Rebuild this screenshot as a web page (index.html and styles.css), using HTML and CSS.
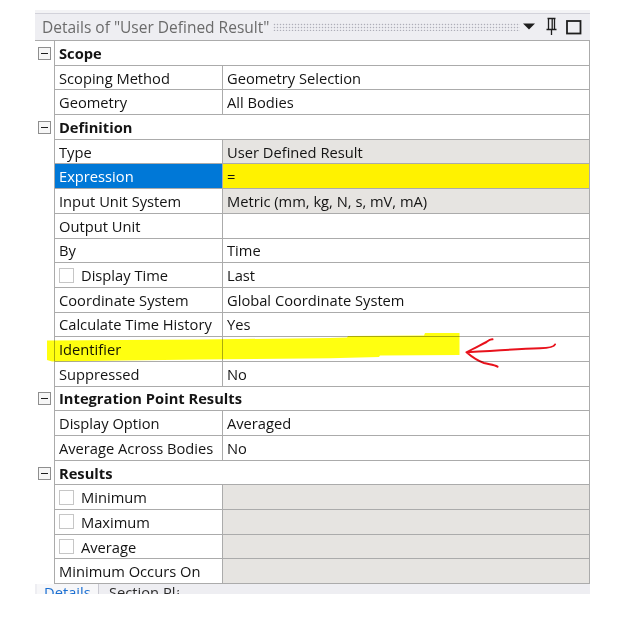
FILE: index.html
```html
<!DOCTYPE html>
<html>
<head>
<meta charset="utf-8">
<title>Details of "User Defined Result"</title>
<link rel="stylesheet" href="styles.css">
</head>
<body>
<div class="panel">
  <div class="band"></div>
  <div class="titlebar">
    <span class="title">Details of "User Defined Result"</span>
    <span class="grip"></span>
    <svg class="tb-icons" width="66" height="26" viewBox="0 0 66 26">
      <polygon points="1,9.5 13,9.5 7,15.5" fill="#1e1e1e"/>
      <path d="M25.5 4.5 H33.5 M26.5 4.5 V15.5 M32.5 4.5 V15.5 M30.2 5 V15 M24.5 15.5 H34.5 M29.5 15.5 V21" stroke="#1e1e1e" stroke-width="1.3" fill="none"/>
      <rect x="45" y="7" width="13.5" height="12.5" fill="none" stroke="#1e1e1e" stroke-width="1.8"/>
    </svg>
  </div>
  <div class="grid">
    <div class="row cat"><div class="gutter"><span class="toggle"></span></div><div class="cells"><div class="label">Scope</div></div></div>
    <div class="row"><div class="gutter"></div><div class="cells"><div class="name">Scoping Method</div><div class="value">Geometry Selection</div></div></div>
    <div class="row"><div class="gutter"></div><div class="cells"><div class="name">Geometry</div><div class="value">All Bodies</div></div></div>
    <div class="row cat"><div class="gutter"><span class="toggle"></span></div><div class="cells"><div class="label">Definition</div></div></div>
    <div class="row"><div class="gutter"></div><div class="cells"><div class="name">Type</div><div class="value gray">User Defined Result</div></div></div>
    <div class="row"><div class="gutter"></div><div class="cells"><div class="name sel">Expression</div><div class="value yel">=</div></div></div>
    <div class="row"><div class="gutter"></div><div class="cells"><div class="name">Input Unit System</div><div class="value gray">Metric (mm, kg, N, s, mV, mA)</div></div></div>
    <div class="row"><div class="gutter"></div><div class="cells"><div class="name">Output Unit</div><div class="value"></div></div></div>
    <div class="row"><div class="gutter"></div><div class="cells"><div class="name">By</div><div class="value">Time</div></div></div>
    <div class="row"><div class="gutter"></div><div class="cells"><div class="name"><span class="cb"></span>Display Time</div><div class="value">Last</div></div></div>
    <div class="row"><div class="gutter"></div><div class="cells"><div class="name">Coordinate System</div><div class="value">Global Coordinate System</div></div></div>
    <div class="row"><div class="gutter"></div><div class="cells"><div class="name">Calculate Time History</div><div class="value">Yes</div></div></div>
    <div class="row"><div class="gutter"></div><div class="cells"><div class="name">Identifier</div><div class="value"></div></div></div>
    <div class="row"><div class="gutter"></div><div class="cells"><div class="name">Suppressed</div><div class="value">No</div></div></div>
    <div class="row cat"><div class="gutter"><span class="toggle"></span></div><div class="cells"><div class="label">Integration Point Results</div></div></div>
    <div class="row"><div class="gutter"></div><div class="cells"><div class="name">Display Option</div><div class="value">Averaged</div></div></div>
    <div class="row"><div class="gutter"></div><div class="cells"><div class="name">Average Across Bodies</div><div class="value">No</div></div></div>
    <div class="row cat"><div class="gutter"><span class="toggle"></span></div><div class="cells"><div class="label">Results</div></div></div>
    <div class="row"><div class="gutter"></div><div class="cells"><div class="name"><span class="cb"></span>Minimum</div><div class="value gray"></div></div></div>
    <div class="row"><div class="gutter"></div><div class="cells"><div class="name"><span class="cb"></span>Maximum</div><div class="value gray"></div></div></div>
    <div class="row"><div class="gutter"></div><div class="cells"><div class="name"><span class="cb"></span>Average</div><div class="value gray"></div></div></div>
    <div class="row"><div class="gutter"></div><div class="cells"><div class="name">Minimum Occurs On</div><div class="value gray"></div></div></div>
  </div>
  <div class="tabs">
    <div class="tab active">Details</div>
    <div class="tab">Section Planes</div>
  </div>
</div>
<svg class="markup" width="639" height="640" viewBox="0 0 639 640">
  <path class="hl" d="M47 340.5 L200 339.5 L330 338 L347 337.5 L348 336 L424 335.5 L425 333 L459.5 333 L459.5 355 L380 355.5 L379 357 L330 358.3 L200 359.5 L52 361.5 L47 360 Z"/>
  <path class="arrow" d="M555 344.5 C554 347 550 348 540 348.3 C520 349 495 350.5 466.5 352.3 M466.5 352.3 C474 348 481 345 486.5 342 C489 340 490 339 492.5 339.3 M466.5 352.3 C472 357 478 361 484 363 C489 364.5 494 364.5 497.5 366.7"/>
</svg>
</body>
</html>
```

FILE: styles.css
```css
html, body {
  margin: 0;
  padding: 0;
  background: #ffffff;
}

body {
  position: relative;
  width: 639px;
  height: 640px;
  overflow: hidden;
  font-family: "Open Sans", "Noto Sans", "DejaVu Sans", sans-serif;
  font-size: 14.7px;
  color: #141414;
}

.panel {
  margin: 10px 0 0 35px;
  width: 555px;
}

.band {
  height: 3px;
  background: #f3f3f5;
}

.titlebar {
  height: 26px;
  border-top: 1px solid #d2d2da;
  background: #eeeef2;
  display: flex;
  align-items: center;
  padding-left: 7px;
}

.title {
  font-size: 15.5px;
  color: #6b6b6b;
  white-space: nowrap;
}

.grip {
  flex: 1;
  height: 8px;
  margin: 0 2px 0 4px;
  background-image: radial-gradient(circle, #aeaeb8 0.75px, transparent 1.05px);
  background-size: 3px 3px;
}

.tb-icons {
  flex: none;
  display: block;
  margin-right: 2px;
}

.grid {
  border-top: 1px solid #ababab;
}

.row {
  display: flex;
  height: 24.7px;
}

.gutter {
  width: 19px;
  flex: none;
  display: flex;
  align-items: center;
}

.toggle {
  position: relative;
  width: 11px;
  height: 11px;
  margin-left: 3px;
  border: 1px solid #8e8e8e;
  background: #f6f6f6;
}

.toggle::after {
  content: "";
  position: absolute;
  left: 2px;
  top: 5px;
  width: 7px;
  height: 1px;
  background: #1e1e1e;
}

.cells {
  flex: 1;
  display: flex;
  box-sizing: border-box;
  border-left: 1px solid #ababab;
  border-right: 1px solid #ababab;
  border-bottom: 1px solid #ababab;
}

.label {
  flex: 1;
  display: flex;
  align-items: center;
  padding-left: 4px;
  font-weight: 700;
}

.name {
  width: 168px;
  flex: none;
  box-sizing: border-box;
  border-right: 1px solid #ababab;
  padding-left: 4px;
  display: flex;
  align-items: center;
  white-space: nowrap;
}

.value {
  flex: 1;
  padding-left: 4px;
  display: flex;
  align-items: center;
  white-space: nowrap;
}

.gray {
  background: #e6e4e1;
}

.sel {
  background: #0078d7;
  color: #ffffff;
}

.yel {
  background: #fff200;
}

.cb {
  width: 15px;
  height: 15px;
  box-sizing: border-box;
  border: 1px solid #c6c6c6;
  background: #ffffff;
  margin-right: 7px;
  flex: none;
}

.tabs {
  height: 10px;
  overflow: hidden;
  background: #eeeef2;
  display: flex;
  padding-left: 2px;
  line-height: 17px;
}

.tab {
  padding-left: 7px;
  white-space: nowrap;
  color: #2b2b2b;
}

.tab.active {
  width: 54px;
  background: #f7f7f9;
  border-right: 1px solid #cacad2;
  color: #1a6fd2;
}

.tab + .tab {
  width: 70px;
  overflow: hidden;
  padding-left: 10px;
}

.markup {
  position: absolute;
  left: 0;
  top: 0;
  pointer-events: none;
  mix-blend-mode: multiply;
}

.hl {
  fill: #ffff10;
}

.arrow {
  fill: none;
  stroke: #e8121c;
  stroke-width: 2;
  stroke-linecap: round;
  stroke-linejoin: round;
}
```
